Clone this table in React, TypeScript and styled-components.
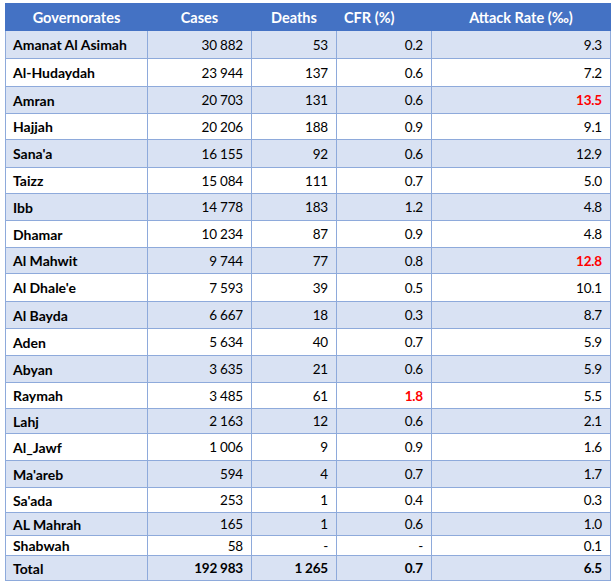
import React from "react";
import styled, { createGlobalStyle } from "styled-components";

const GlobalStyle = createGlobalStyle`
  html, body {
    margin: 0;
    padding: 0;
    background: #ffffff;
  }
  body {
    font-family: Lato, "Open Sans", sans-serif;
  }
`;

const Page = styled.div`
  width: 615px;
  height: 586px;
  padding: 3px 0 0 5px;
  box-sizing: border-box;
  background: #ffffff;
`;

const Table = styled.table`
  width: 605px;
  border-collapse: collapse;
  table-layout: fixed;
  font-family: Lato, "Open Sans", sans-serif;
  font-size: 13px;
  color: #000000;
`;

const HeadCell = styled.th<{ align?: string }>`
  height: 27px;
  padding: 0 7px;
  background: #4472c4;
  color: #ffffff;
  font-size: 14.5px;
  font-weight: 700;
  text-align: ${(p) => p.align || "center"};
  border: 1px solid #4472c4;
  box-sizing: border-box;
  white-space: nowrap;
`;

const Row = styled.tr<{ shaded: boolean; h: number }>`
  height: ${(p) => p.h}px;
  background: ${(p) => (p.shaded ? "#d9e2f3" : "#ffffff")};
`;

const NameCell = styled.td`
  padding: 0 7px;
  font-size: 14px;
  font-weight: 700;
  text-align: left;
  border: 1px solid #8eaadb;
  white-space: nowrap;
`;

const NumCell = styled.td<{ bold?: boolean; alert?: boolean }>`
  padding: 0 8px;
  font-size: 13.5px;
  text-align: right;
  font-weight: ${(p) => (p.bold || p.alert ? 700 : 400)};
  color: ${(p) => (p.alert ? "#ff0000" : "#000000")};
  border: 1px solid #8eaadb;
  white-space: nowrap;
  letter-spacing: -0.2px;
`;

interface Entry {
  name: string;
  cases: string;
  deaths: string;
  cfr: string;
  rate: string;
  h: number;
  alertCfr?: boolean;
  alertRate?: boolean;
}

const rows: Entry[] = [
  { name: "Amanat Al Asimah", cases: "30 882", deaths: "53", cfr: "0.2", rate: "9.3", h: 28 },
  { name: "Al-Hudaydah", cases: "23 944", deaths: "137", cfr: "0.6", rate: "7.2", h: 28 },
  { name: "Amran", cases: "20 703", deaths: "131", cfr: "0.6", rate: "13.5", h: 27, alertRate: true },
  { name: "Hajjah", cases: "20 206", deaths: "188", cfr: "0.9", rate: "9.1", h: 26 },
  { name: "Sana'a", cases: "16 155", deaths: "92", cfr: "0.6", rate: "12.9", h: 28 },
  { name: "Taizz", cases: "15 084", deaths: "111", cfr: "0.7", rate: "5.0", h: 26 },
  { name: "Ibb", cases: "14 778", deaths: "183", cfr: "1.2", rate: "4.8", h: 27 },
  { name: "Dhamar", cases: "10 234", deaths: "87", cfr: "0.9", rate: "4.8", h: 27 },
  { name: "Al Mahwit", cases: "9 744", deaths: "77", cfr: "0.8", rate: "12.8", h: 26, alertRate: true },
  { name: "Al Dhale'e", cases: "7 593", deaths: "39", cfr: "0.5", rate: "10.1", h: 28 },
  { name: "Al Bayda", cases: "6 667", deaths: "18", cfr: "0.3", rate: "8.7", h: 27 },
  { name: "Aden", cases: "5 634", deaths: "40", cfr: "0.7", rate: "5.9", h: 27 },
  { name: "Abyan", cases: "3 635", deaths: "21", cfr: "0.6", rate: "5.9", h: 27 },
  { name: "Raymah", cases: "3 485", deaths: "61", cfr: "1.8", rate: "5.5", h: 26, alertCfr: true },
  { name: "Lahj", cases: "2 163", deaths: "12", cfr: "0.6", rate: "2.1", h: 25 },
  { name: "Al_Jawf", cases: "1 006", deaths: "9", cfr: "0.9", rate: "1.6", h: 27 },
  { name: "Ma'areb", cases: "594", deaths: "4", cfr: "0.7", rate: "1.7", h: 27 },
  { name: "Sa'ada", cases: "253", deaths: "1", cfr: "0.4", rate: "0.3", h: 25 },
  { name: "AL Mahrah", cases: "165", deaths: "1", cfr: "0.6", rate: "1.0", h: 23 },
  { name: "Shabwah", cases: "58", deaths: "-", cfr: "-", rate: "0.1", h: 20 },
];

const total = { cases: "192 983", deaths: "1 265", cfr: "0.7", rate: "6.5" };

export default function App() {
  return (
    <Page>
      <GlobalStyle />
      <Table>
        <colgroup>
          <col style={{ width: 142 }} />
          <col style={{ width: 104 }} />
          <col style={{ width: 85 }} />
          <col style={{ width: 95 }} />
          <col style={{ width: 179 }} />
        </colgroup>
        <thead>
          <tr>
            <HeadCell>Governorates</HeadCell>
            <HeadCell>Cases</HeadCell>
            <HeadCell>Deaths</HeadCell>
            <HeadCell align="left">CFR (%)</HeadCell>
            <HeadCell>Attack Rate (‰)</HeadCell>
          </tr>
        </thead>
        <tbody>
          {rows.map((r, i) => (
            <Row key={r.name} shaded={i % 2 === 0} h={r.h}>
              <NameCell>{r.name}</NameCell>
              <NumCell>{r.cases}</NumCell>
              <NumCell>{r.deaths}</NumCell>
              <NumCell alert={r.alertCfr}>{r.cfr}</NumCell>
              <NumCell alert={r.alertRate}>{r.rate}</NumCell>
            </Row>
          ))}
          <Row shaded h={25}>
            <NameCell>Total</NameCell>
            <NumCell bold>{total.cases}</NumCell>
            <NumCell bold>{total.deaths}</NumCell>
            <NumCell bold>{total.cfr}</NumCell>
            <NumCell bold>{total.rate}</NumCell>
          </Row>
        </tbody>
      </Table>
    </Page>
  );
}
